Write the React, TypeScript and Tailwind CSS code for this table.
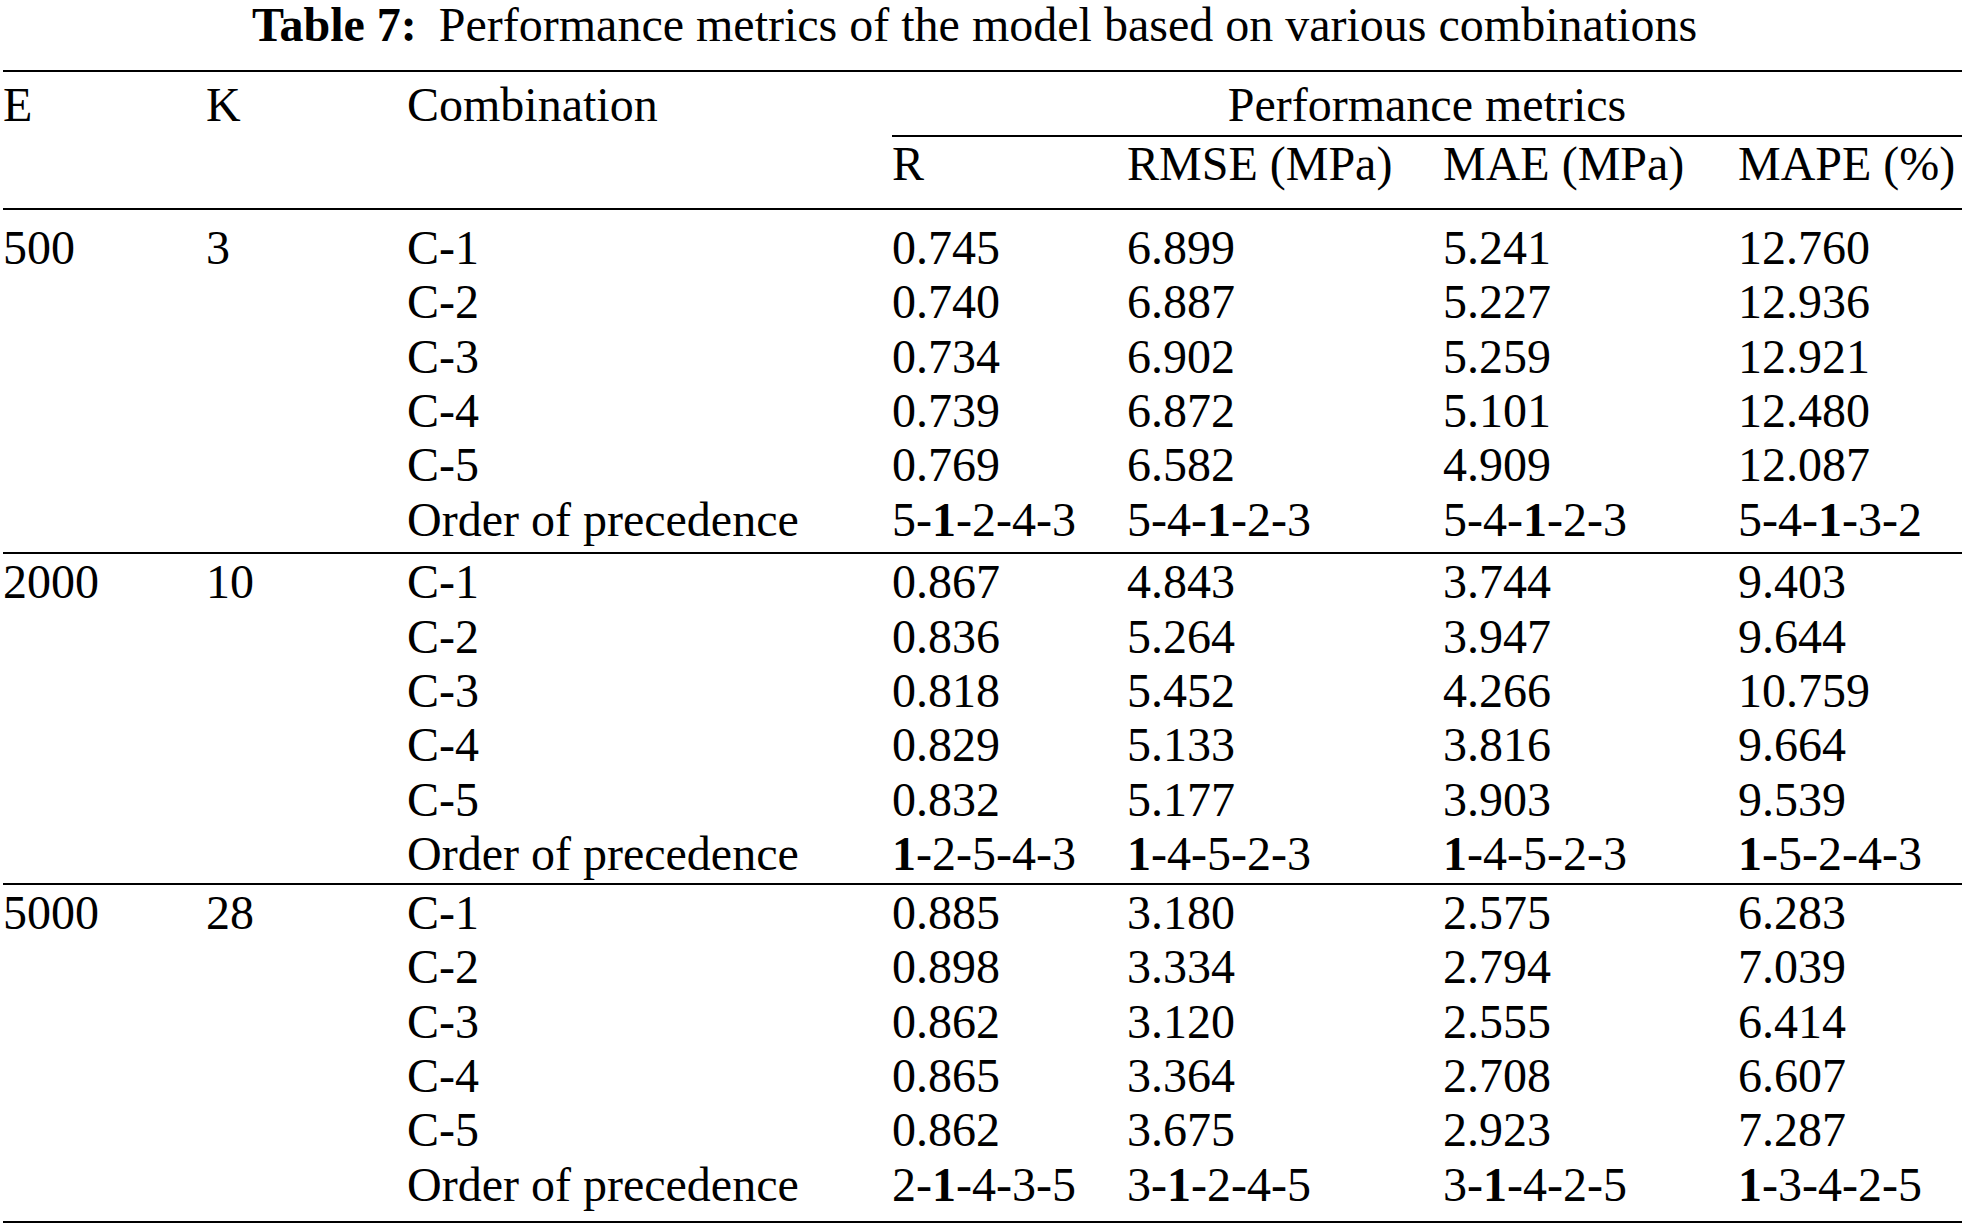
import * as React from "react";

type Row = {
  combination: string;
  values: React.ReactNode[];
};

type Group = {
  e: string;
  k: string;
  rows: Row[];
  className: string;
};

// bold the "1" inside an order-of-precedence string
function order(text: string) {
  const parts = text.split("-");
  return (
    <>
      {parts.map((part, i) => (
        <React.Fragment key={i}>
          {i > 0 ? "-" : null}
          {part === "1" ? <span className="font-bold">1</span> : part}
        </React.Fragment>
      ))}
    </>
  );
}

const groups: Group[] = [
  {
    e: "500",
    k: "3",
    className: "pt-[11px] pb-[5px]",
    rows: [
      { combination: "C-1", values: ["0.745", "6.899", "5.241", "12.760"] },
      { combination: "C-2", values: ["0.740", "6.887", "5.227", "12.936"] },
      { combination: "C-3", values: ["0.734", "6.902", "5.259", "12.921"] },
      { combination: "C-4", values: ["0.739", "6.872", "5.101", "12.480"] },
      { combination: "C-5", values: ["0.769", "6.582", "4.909", "12.087"] },
      {
        combination: "Order of precedence",
        values: [order("5-1-2-4-3"), order("5-4-1-2-3"), order("5-4-1-2-3"), order("5-4-1-3-2")],
      },
    ],
  },
  {
    e: "2000",
    k: "10",
    className: "pt-px pb-px",
    rows: [
      { combination: "C-1", values: ["0.867", "4.843", "3.744", "9.403"] },
      { combination: "C-2", values: ["0.836", "5.264", "3.947", "9.644"] },
      { combination: "C-3", values: ["0.818", "5.452", "4.266", "10.759"] },
      { combination: "C-4", values: ["0.829", "5.133", "3.816", "9.664"] },
      { combination: "C-5", values: ["0.832", "5.177", "3.903", "9.539"] },
      {
        combination: "Order of precedence",
        values: [order("1-2-5-4-3"), order("1-4-5-2-3"), order("1-4-5-2-3"), order("1-5-2-4-3")],
      },
    ],
  },
  {
    e: "5000",
    k: "28",
    className: "pt-px pb-[9px]",
    rows: [
      { combination: "C-1", values: ["0.885", "3.180", "2.575", "6.283"] },
      { combination: "C-2", values: ["0.898", "3.334", "2.794", "7.039"] },
      { combination: "C-3", values: ["0.862", "3.120", "2.555", "6.414"] },
      { combination: "C-4", values: ["0.865", "3.364", "2.708", "6.607"] },
      { combination: "C-5", values: ["0.862", "3.675", "2.923", "7.287"] },
      {
        combination: "Order of precedence",
        values: [order("2-1-4-3-5"), order("3-1-2-4-5"), order("3-1-4-2-5"), order("1-3-4-2-5")],
      },
    ],
  },
];

const cols = "grid grid-cols-[203px_201px_485px_235px_316px_295px_1fr]";

function Rule() {
  return <div className="h-[2px] bg-black" />;
}

export default function App() {
  return (
    <div
      className="min-h-[1225px] w-[1967px] bg-white text-black text-[48px] leading-[54.4px]"
      style={{ fontFamily: '"Liberation Serif", "Times New Roman", serif' }}
    >
      <div className="flex h-[50px] items-center justify-center pr-[18px] leading-[50px] whitespace-pre">
        <span className="font-bold">Table 7:</span>
        <span className="ml-[10px]"> Performance metrics of the model based on various combinations</span>
      </div>

      <div className="mt-[20px] mr-[5px] ml-[3px]">
        <Rule />

        <div className={`${cols} pt-[6px] pb-[16px]`}>
          <div className="row-span-2">E</div>
          <div className="row-span-2">K</div>
          <div className="row-span-2">Combination</div>
          <div className="col-span-4 border-b-2 border-black pb-[3px] text-center">
            Performance metrics
          </div>
          <div>R</div>
          <div>RMSE (MPa)</div>
          <div>MAE (MPa)</div>
          <div>MAPE (%)</div>
        </div>

        <Rule />

        {groups.map((group) => (
          <React.Fragment key={group.e}>
            <div className={`${cols} ${group.className}`}>
              {group.rows.map((row, ri) => (
                <React.Fragment key={ri}>
                  <div>{ri === 0 ? group.e : ""}</div>
                  <div>{ri === 0 ? group.k : ""}</div>
                  <div>{row.combination}</div>
                  {row.values.map((value, vi) => (
                    <div key={vi} className="whitespace-nowrap">
                      {value}
                    </div>
                  ))}
                </React.Fragment>
              ))}
            </div>
            <Rule />
          </React.Fragment>
        ))}
      </div>
    </div>
  );
}
